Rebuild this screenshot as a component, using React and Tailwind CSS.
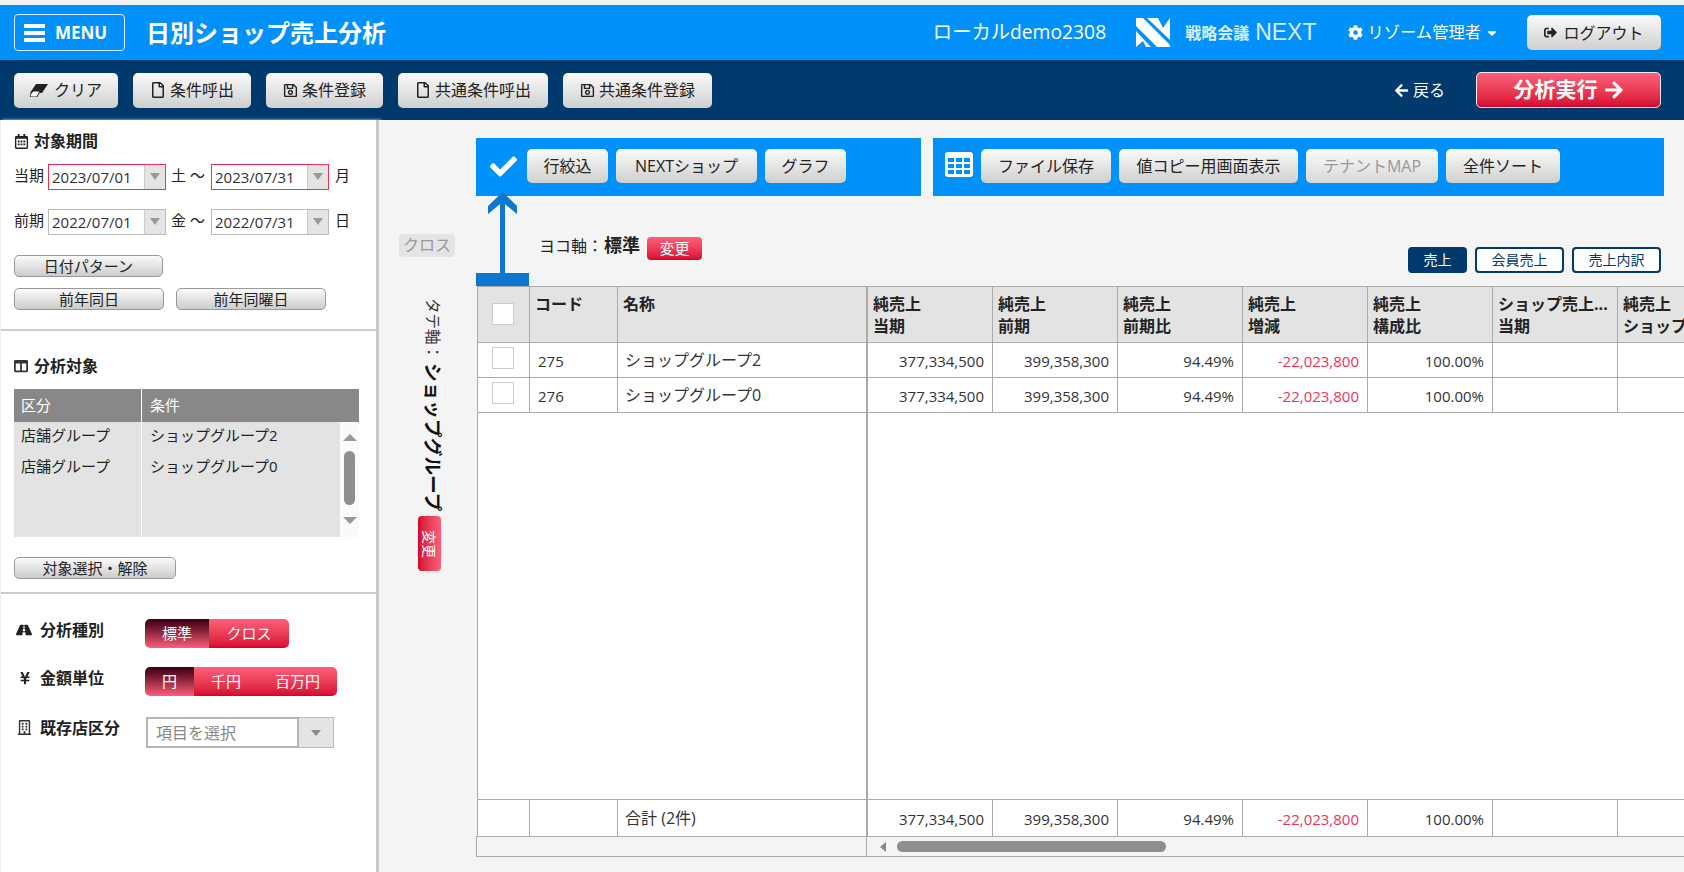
import {
  FaRegFile, FaRegSave, FaCheck, FaCog, FaSignOutAlt, FaArrowLeft, FaArrowRight,
  FaRegCalendarAlt, FaColumns, FaRoad, FaYenSign, FaRegBuilding, FaCaretDown,
} from 'react-icons/fa';

const COLS = 'grid grid-cols-[52px_88px_250px_repeat(6,125px)_125px]';
const cell = 'border-r border-[#aaaaaa] overflow-hidden';
const divider = 'border-r-2 border-[#aaaaaa] overflow-hidden';
const numCell = 'border-r border-[#aaaaaa] flex items-center justify-end pr-[8px] pt-[3px] text-[15px] text-[#333333]';
const redCell = 'border-r border-[#aaaaaa] flex items-center justify-end pr-[8px] pt-[3px] text-[15px] text-[#f0325a]';

function ToolButton({ icon, label, className }) {
  return (
    <button className={`rounded-[5px] bg-linear-to-b from-[#fbfbfb] to-[#cfcfcf] text-[16px] text-[#222222] flex items-center justify-center gap-1 ${className}`}>
      {icon}
      {label}
    </button>
  );
}

function SideButton({ label, className }) {
  return (
    <button className={`h-[22px] rounded-[5px] border border-[#999999] bg-linear-to-b from-[#fbfbfb] to-[#cccccc] text-[15px] leading-none text-[#222222] flex items-center justify-center ${className}`}>
      {label}
    </button>
  );
}

function DateInput({ value, red }) {
  return (
    <div className={`w-[118px] h-[26px] border flex ${red ? 'border-[#f0325a]' : 'border-[#bbbbbb]'}`}>
      <span className="flex-1 pl-[3px] text-[15px] leading-[24px] text-[#333333]">{value}</span>
      <span className="w-[21px] bg-[#e4e4e4] border-l border-[#cccccc] flex justify-center pt-[8px]">
        <span className="w-0 h-0 border-x-[5px] border-x-transparent border-t-[7px] border-t-[#999999]" />
      </span>
    </div>
  );
}

function Segment({ items }) {
  return (
    <div className="flex h-[29px] rounded-[5px] overflow-hidden text-[15px] text-white">
      {items.map((it) => (
        <span
          key={it.label}
          className={`flex items-center justify-center ${it.w} ${it.on ? 'bg-linear-to-b from-[#3a0010] to-[#ff5e7c]' : 'bg-linear-to-b from-[#ff5e7c] to-[#d6002e]'}`}
        >
          {it.label}
        </span>
      ))}
    </div>
  );
}

function EraserIcon() {
  return (
    <svg width="18" height="13" viewBox="0 0 18 13" className="mr-[2px]">
      <path d="M6 0 H18 L12 9 H0 Z" fill="#222222" />
      <path d="M3 7 H10 L7 13 H0.5 L0 11 Z" fill="#ffffff" stroke="#222222" strokeWidth="1" />
    </svg>
  );
}

function Sidebar() {
  return (
    <aside className="w-[379px] shrink-0 border-l border-[#eeeeee] border-r-[3px] border-r-[#c8c8c8] bg-white text-[15px] text-[#222222] shadow-[2px_0_3px_#dddddd] flex flex-col">
      {/* 対象期間 */}
      <div className="h-[211px] shrink-0 border-b-2 border-[#cccccc] pl-[13px] pt-[11px]">
        <h3 className="h-[20px] flex items-center gap-[5px] text-[16px] font-bold">
          <FaRegCalendarAlt className="text-[15px]" />
          対象期間
        </h3>
        <div className="mt-[13px] flex items-start">
          <span className="w-[34px] leading-[22px]">当期</span>
          <DateInput value="2023/07/01" red />
          <span className="w-[45px] pl-[5px] leading-[22px]">土 ～</span>
          <DateInput value="2023/07/31" red />
          <span className="pl-[6px] leading-[22px]">月</span>
        </div>
        <div className="mt-[19px] flex items-start">
          <span className="w-[34px] leading-[22px]">前期</span>
          <DateInput value="2022/07/01" />
          <span className="w-[45px] pl-[5px] leading-[22px]">金 ～</span>
          <DateInput value="2022/07/31" />
          <span className="pl-[6px] leading-[22px]">日</span>
        </div>
        <SideButton label="日付パターン" className="mt-[20px] w-[149px]" />
        <div className="mt-[11px] flex gap-[12px]">
          <SideButton label="前年同日" className="w-[150px]" />
          <SideButton label="前年同曜日" className="w-[150px]" />
        </div>
      </div>

      {/* 分析対象 */}
      <div className="h-[263px] shrink-0 border-b-2 border-[#cccccc] pl-[13px] pt-[25px]">
        <h3 className="h-[20px] flex items-center gap-[6px] text-[16px] font-bold">
          <FaColumns className="text-[14px] text-[#333333]" />
          分析対象
        </h3>
        <div className="mt-[13px] w-[345px]">
          <div className="h-[33px] bg-[#888888] text-white flex items-center">
            <span className="w-[128px] pl-[7px] border-r border-white h-full flex items-center">区分</span>
            <span className="pl-[8px]">条件</span>
          </div>
          <div className="h-[115px] flex">
            <div className="w-[128px] bg-[#e3e3e3] border-r border-white pl-[7px] flex flex-col gap-[5px] leading-[26px]">
              <p>店舗グループ</p>
              <p>店舗グループ</p>
            </div>
            <div className="flex-1 bg-[#e3e3e3] pl-[8px] flex flex-col gap-[5px] leading-[26px]">
              <p>ショップグループ2</p>
              <p>ショップグループ0</p>
            </div>
            <div className="w-[19px] bg-[#fafafa] flex flex-col items-center pt-[12px]">
              <span className="w-0 h-0 border-x-[7px] border-x-transparent border-b-[7px] border-b-[#999999]" />
              <span className="mt-[10px] w-[11px] h-[54px] rounded-full bg-[#8e8e8e]" />
              <span className="mt-[12px] w-0 h-0 border-x-[7px] border-x-transparent border-t-[7px] border-t-[#999999]" />
            </div>
          </div>
        </div>
        <SideButton label="対象選択・解除" className="mt-[20px] w-[162px]" />
      </div>

      {/* 分析種別ほか */}
      <div className="flex-1 pl-[15px] pt-[25px]">
        <div className="flex items-start">
          <span className="w-[24px] pt-[3px] text-[16px] flex"><FaRoad /></span>
          <b className="w-[105px] text-[16px] leading-[22px]">分析種別</b>
          <Segment items={[{ label: '標準', w: 'w-[64px]', on: true }, { label: 'クロス', w: 'w-[80px]' }]} />
        </div>
        <div className="mt-[19px] flex items-start">
          <span className="w-[24px] pt-[4px] pl-[2px] text-[14px] flex"><FaYenSign /></span>
          <b className="w-[105px] text-[16px] leading-[22px]">金額単位</b>
          <Segment items={[{ label: '円', w: 'w-[49px]', on: true }, { label: '千円', w: 'w-[64px]' }, { label: '百万円', w: 'w-[79px]' }]} />
        </div>
        <div className="mt-[21px] flex items-start">
          <span className="w-[24px] pt-[3px] pl-[1px] text-[15px] flex text-[#333333]"><FaRegBuilding /></span>
          <b className="w-[106px] text-[16px] leading-[22px]">既存店区分</b>
          <div className="w-[188px] h-[31px] flex">
            <span className="w-[153px] border-2 border-[#b5b5b5] bg-white pl-[8px] text-[16px] leading-[28px] text-[#888888]">項目を選択</span>
            <span className="flex-1 bg-[#e4e4e4] border border-l-0 border-[#bbbbbb] flex justify-center pt-[12px]">
              <span className="w-0 h-0 border-x-[5px] border-x-transparent border-t-[6px] border-t-[#888888]" />
            </span>
          </div>
        </div>
      </div>
    </aside>
  );
}

function HeadCell({ a, b, className = cell }) {
  return (
    <div className={`${className} pl-[5px] pt-[6px] text-[16px] leading-[22px] font-bold whitespace-nowrap text-[#222222]`}>
      <p>{a}</p>
      <p>{b}</p>
    </div>
  );
}

function Check({ className }) {
  return <span className={`block w-[22px] h-[22px] bg-white border border-[#cccccc] ${className}`} />;
}

function DataRow({ code, name }) {
  return (
    <div className={`${COLS} h-[35px] border-b border-[#aaaaaa] bg-white text-[#333333]`}>
      <div className={`${cell} pl-[14px] pt-[4px]`}><Check /></div>
      <div className={`${cell} pl-[8px] pt-[3px] text-[15px] leading-[31px]`}>{code}</div>
      <div className={`${divider} pl-[7px] pt-[2px] text-[16px] leading-[31px] whitespace-nowrap`}>{name}</div>
      <div className={numCell}>377,334,500</div>
      <div className={numCell}>399,358,300</div>
      <div className={numCell}>94.49%</div>
      <div className={redCell}>-22,023,800</div>
      <div className={numCell}>100.00%</div>
      <div className={cell} />
      <div className={cell} />
    </div>
  );
}

function SalesTable() {
  return (
    <div className="h-[571px] flex flex-col overflow-hidden">
      <div className="flex-1 flex flex-col border-l border-[#aaaaaa] ml-px overflow-hidden">
        <div className={`${COLS} h-[57px] shrink-0 border-y border-[#aaaaaa] bg-[#e3e3e3]`}>
          <div className={`${cell} pl-[14px] pt-[16px]`}><Check /></div>
          <HeadCell a="コード" />
          <HeadCell a="名称" className={divider} />
          <HeadCell a="純売上" b="当期" />
          <HeadCell a="純売上" b="前期" />
          <HeadCell a="純売上" b="前期比" />
          <HeadCell a="純売上" b="増減" />
          <HeadCell a="純売上" b="構成比" />
          <HeadCell a="ショップ売上..." b="当期" />
          <HeadCell a="純売上" b="ショップ" />
        </div>
        <DataRow code="275" name="ショップグループ2" />
        <DataRow code="276" name="ショップグループ0" />
        <div className="flex-1 flex bg-white border-b border-[#aaaaaa]">
          <div className="w-[390px] border-r-2 border-[#aaaaaa]" />
        </div>
        <div className={`${COLS} h-[36px] shrink-0 bg-white text-[#333333]`}>
          <div className={cell} />
          <div className={cell} />
          <div className={`${divider} pl-[7px] text-[16px] leading-[36px]`}>合計 (2件)</div>
          <div className={numCell}>377,334,500</div>
          <div className={numCell}>399,358,300</div>
          <div className={numCell}>94.49%</div>
          <div className={redCell}>-22,023,800</div>
          <div className={numCell}>100.00%</div>
          <div className={cell} />
          <div className={cell} />
        </div>
      </div>
      <div className="h-[21px] shrink-0 border-y border-[#aaaaaa] border-l flex">
        <div className="w-[390px] border-r border-[#aaaaaa]" />
        <div className="flex-1 flex items-center pl-[13px]">
          <span className="w-0 h-0 border-y-[5px] border-y-transparent border-r-[6px] border-r-[#888888]" />
          <span className="ml-[11px] w-[269px] h-[11px] rounded-full bg-[#8e8e8e]" />
        </div>
      </div>
    </div>
  );
}

function Main() {
  return (
    <main className="flex-1 flex bg-[#f4f4f4] relative overflow-hidden">
      {/* タテ軸 */}
      <div className="w-[97px] shrink-0 flex flex-col items-start pl-[20px] pt-[114px]">
        <span className="w-[56px] h-[23px] rounded-[4px] bg-[#e4e4e4] text-[16px] leading-[23px] text-center text-[#999999]">クロス</span>
        <div className="mt-[41px] ml-[22px] [writing-mode:vertical-rl] [text-orientation:sideways] flex items-center text-[15.5px] leading-[24px] text-[#333333] whitespace-nowrap">
          <span className="mb-[3px]">タテ軸：</span>
          <b className="text-[18.7px] text-[#111111]">ショップグループ</b>
        </div>
        <span className="mt-[5px] ml-[19px] w-[23px] h-[55px] rounded-[4px] bg-linear-to-r from-[#d6002e] to-[#ff5e7c] text-white text-[14px] [writing-mode:vertical-rl] [text-orientation:sideways] flex items-center justify-center">変更</span>
      </div>

      <div className="flex-1 min-w-0 pt-[18px]">
        {/* ツールバー */}
        <div className="flex gap-[12px]">
          <div className="w-[445px] h-[58px] bg-[#0091fa] flex items-start pl-[14px] pt-[11px] gap-[8px]">
            <FaCheck className="mt-[4px] text-white text-[27px] mr-[2px]" />
            <ToolButton label="行絞込" className="h-[34px] w-[81px]" />
            <ToolButton label="NEXTショップ" className="h-[34px] w-[141px]" />
            <ToolButton label="グラフ" className="h-[34px] w-[81px]" />
          </div>
          <div className="w-[731px] h-[58px] bg-[#0091fa] flex items-start pl-[12px] pt-[11px] gap-[8px]">
            <svg width="28" height="25" viewBox="0 0 28 25" className="mt-[3px]">
              <rect width="28" height="25" rx="3" fill="#ffffff" />
              <g fill="#0091fa">
                <rect x="3" y="6" width="6" height="4" />
                <rect x="11" y="6" width="6" height="4" />
                <rect x="19" y="6" width="6" height="4" />
                <rect x="3" y="12" width="6" height="4" />
                <rect x="11" y="12" width="6" height="4" />
                <rect x="19" y="12" width="6" height="4" />
                <rect x="3" y="18" width="6" height="4" />
                <rect x="11" y="18" width="6" height="4" />
                <rect x="19" y="18" width="6" height="4" />
              </g>
            </svg>
            <ToolButton label="ファイル保存" className="h-[34px] w-[130px]" />
            <ToolButton label="値コピー用画面表示" className="h-[34px] w-[179px]" />
            <ToolButton label="テナントMAP" className="h-[34px] w-[132px] !text-[#999999] from-[#e2e2e2] to-[#d8d8d8]" />
            <ToolButton label="全件ソート" className="h-[34px] w-[114px]" />
          </div>
        </div>

        {/* ヨコ軸 */}
        <div className="h-[90px] flex pl-[63px] pr-[23px]">
          <div className="flex items-start text-[16px] text-[#222222]">
            <span className="mt-[38px] leading-[24px]">ヨコ軸：</span>
            <b className="mt-[36px] ml-[1px] text-[18px] leading-[26px]">標準</b>
            <span className="mt-[41px] ml-[7px] w-[55px] h-[23px] rounded-[4px] bg-linear-to-b from-[#ff5e7c] to-[#d6002e] text-white text-[15px] leading-[23px] text-center">変更</span>
          </div>
          <div className="ml-auto flex items-start gap-[8px] pt-[51px] text-[14px]">
            <span className="w-[59px] h-[26px] rounded-[4px] bg-[#003a6c] text-white leading-[26px] text-center">売上</span>
            <span className="w-[89px] h-[26px] rounded-[4px] border-2 border-[#003a6c] bg-white text-[#003a6c] leading-[22px] text-center">会員売上</span>
            <span className="w-[89px] h-[26px] rounded-[4px] border-2 border-[#003a6c] bg-white text-[#003a6c] leading-[22px] text-center">売上内訳</span>
          </div>
        </div>

        <SalesTable />
      </div>

      {/* 矢印 */}
      <svg width="53" height="94" viewBox="0 0 53 94" className="absolute left-[97px] top-[72px]">
        <path d="M26.5 0 L41 14 V22 L26.5 10 L12 22 V14 Z" fill="#0d76d1" />
        <rect x="24" y="6" width="5" height="76" fill="#0d76d1" />
        <rect y="81" width="53" height="13" fill="#0d76d1" />
      </svg>
    </main>
  );
}

export default function App() {
  return (
    <div className="w-[1684px] h-[872px] overflow-hidden flex flex-col bg-white font-['Open_Sans','Noto_Sans_CJK_JP',sans-serif]">
      <div className="h-[5px] shrink-0 bg-[#f2f2f2]" />

      {/* ヘッダー */}
      <header className="h-[55px] shrink-0 bg-[#0091fa] flex items-center text-white pl-[14px] pr-[23px]">
        <button className="w-[111px] h-[37px] rounded-[4px] border-[1.5px] border-[#d8eeff] flex items-center pl-[9px] gap-[10px] text-[17px] font-bold">
          <span className="w-[21px] flex flex-col gap-[3px]">
            <span className="h-[4px] bg-white" />
            <span className="h-[4px] bg-white" />
            <span className="h-[4px] bg-white" />
          </span>
          MENU
        </button>
        <h1 className="ml-[21px] text-[24px] font-bold">日別ショップ売上分析</h1>
        <span className="ml-auto text-[19.3px]">ローカルdemo2308</span>
        <svg width="34" height="29" viewBox="0 0 34 29" className="ml-[30px]">
          <path d="M0 0 H7 L34 27 V29 H21 L0 8 Z" fill="#ffffff" />
          <path d="M11 0 H34 V22 Z" fill="#ffffff" />
          <path d="M22 0 H34 L27 10 Z" fill="#0091fa" />
          <path d="M0 13 L15 29 H10 L7 23 L0 29 Z" fill="#ffffff" />
        </svg>
        <span className="ml-[15px] flex items-center opacity-85">
          <b className="text-[16px]">戦略会議</b>
          <span className="ml-[6px] font-['Liberation_Sans',sans-serif] text-[23px] leading-none">NEXT</span>
        </span>
        <FaCog className="ml-[31px] text-[15px]" />
        <span className="ml-[5px] text-[16.3px]">リゾーム管理者</span>
        <FaCaretDown className="ml-[4px] text-[14px]" />
        <button className="ml-[28px] w-[134px] h-[35px] rounded-[5px] bg-linear-to-b from-[#fbfbfb] to-[#cfcfcf] text-[#222222] text-[16px] flex items-center justify-center gap-[6px]">
          <FaSignOutAlt className="text-[13px]" />
          ログアウト
        </button>
      </header>

      {/* 操作バー */}
      <div className="h-[60px] shrink-0 bg-[#003a6c] flex items-center pl-[14px] pr-[23px]">
        <div className="flex gap-[15px]">
          <ToolButton icon={<EraserIcon />} label="クリア" className="h-[35px] w-[104px]" />
          <ToolButton icon={<FaRegFile className="text-[16px]" />} label="条件呼出" className="h-[35px] w-[118px]" />
          <ToolButton icon={<FaRegSave className="text-[15px]" />} label="条件登録" className="h-[35px] w-[117px]" />
          <ToolButton icon={<FaRegFile className="text-[16px]" />} label="共通条件呼出" className="h-[35px] w-[150px]" />
          <ToolButton icon={<FaRegSave className="text-[15px]" />} label="共通条件登録" className="h-[35px] w-[149px]" />
        </div>
        <span className="ml-auto flex items-center gap-[4px] text-[16px] text-white">
          <FaArrowLeft className="text-[15px]" />
          戻る
        </span>
        <button className="ml-[31px] w-[185px] h-[36px] rounded-[5px] border border-[#eeeeee] bg-linear-to-b from-[#ff5e7c] to-[#d6002e] text-white text-[21px] font-bold flex items-center justify-center gap-[6px]">
          分析実行
          <FaArrowRight className="text-[20px]" />
        </button>
      </div>

      <div className="flex-1 flex min-h-0">
        <Sidebar />
        <Main />
      </div>
    </div>
  );
}
